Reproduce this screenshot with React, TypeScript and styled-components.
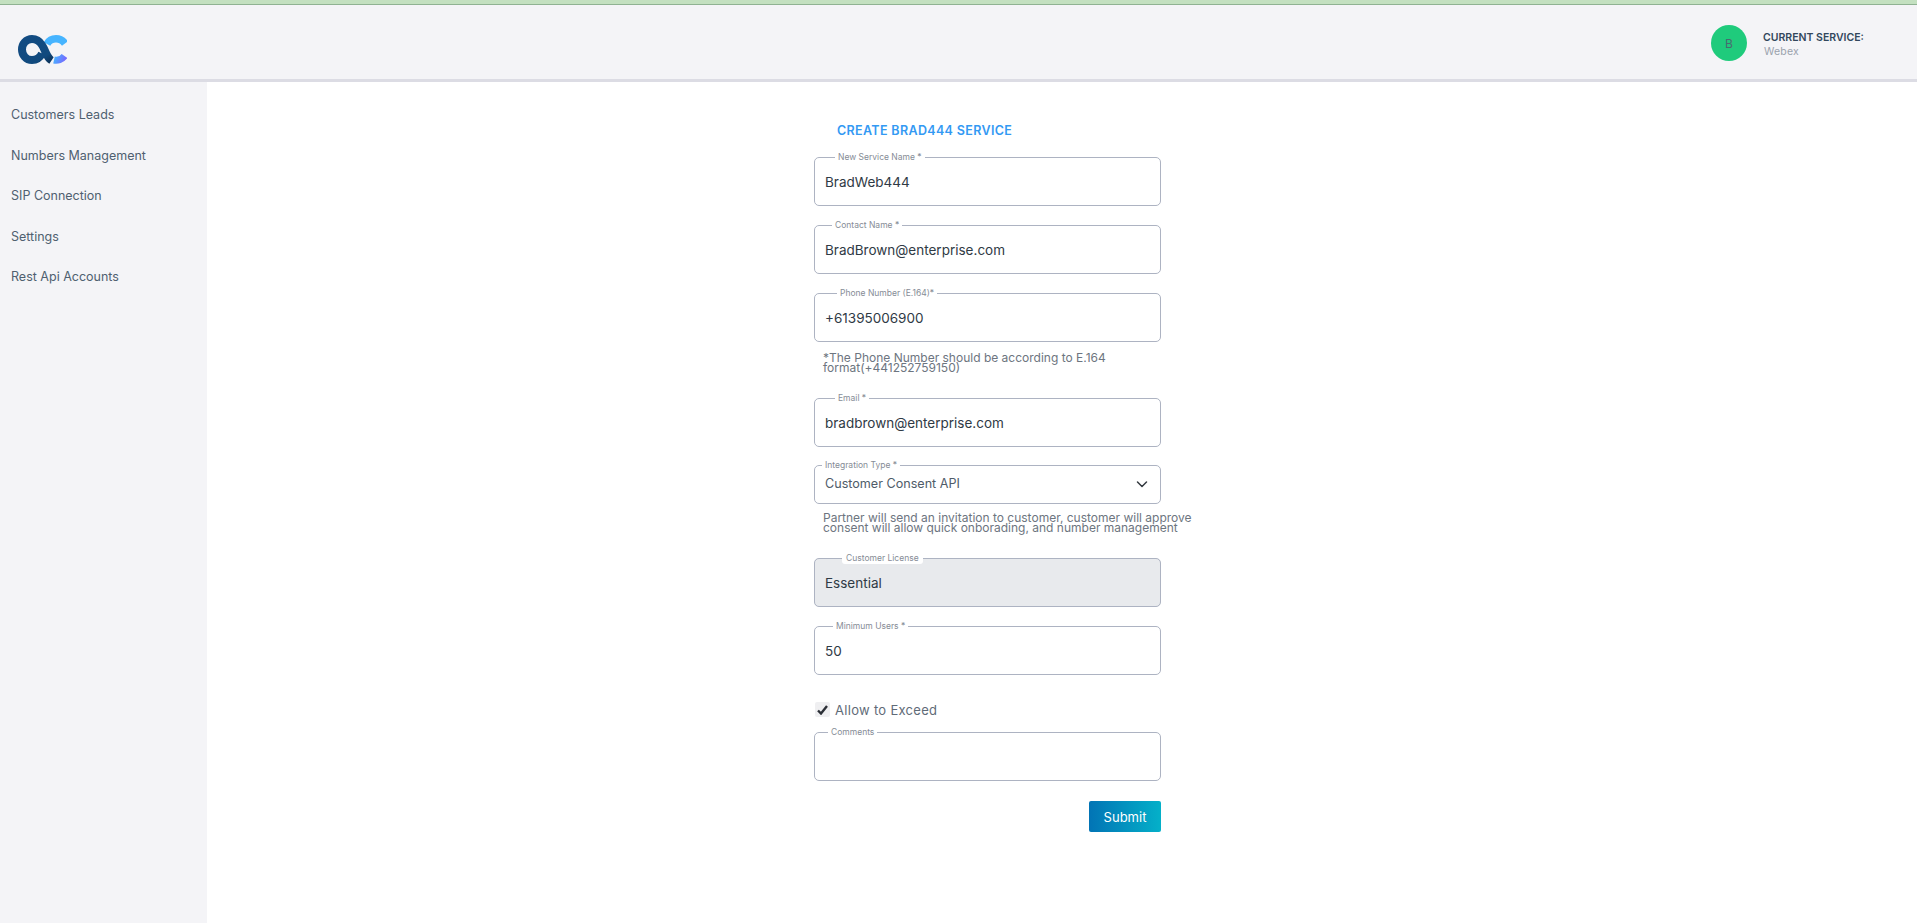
import styled, { createGlobalStyle } from 'styled-components'

const GlobalStyle = createGlobalStyle`
  html, body {
    margin: 0;
    padding: 0;
    background: #fff;
    font-family: Inter, "Liberation Sans", sans-serif;
  }
  * { box-sizing: border-box; }
`;

const Page = styled.div`
  display: flex;
  flex-direction: column;
  height: 923px;
  overflow: hidden;
`;

const TopStrip = styled.div`
  height: 5px;
  flex: none;
  background: #c3e0c0;
  border-bottom: 1px solid #8fb292;
`;

const Header = styled.header`
  display: flex;
  flex: none;
  align-items: center;
  justify-content: space-between;
  height: 77px;
  padding: 2px 0 0 18px;
  background: #f4f4f7;
  border-bottom: 3px solid #dcdce4;
`;

const LogoMark = styled.svg`
  margin-top: 13px;
`;

const ServiceInfo = styled.div`
  display: flex;
  align-items: center;
  width: 206px;
`;

const Avatar = styled.div`
  display: flex;
  align-items: center;
  justify-content: center;
  width: 36px;
  height: 36px;
  margin-right: 16px;
  border-radius: 50%;
  background: #1fcb7c;
  color: #4a6a70;
  font-size: 12px;
`;

const ServiceText = styled.div`
  margin-top: 4px;
`;

const ServiceLabel = styled.div`
  color: #32475c;
  font-size: 10.5px;
  font-weight: 600;
  line-height: 14px;
`;

const ServiceName = styled.div`
  margin-left: 1px;
  color: #9aa2ad;
  font-size: 10.5px;
  line-height: 14px;
  letter-spacing: 0.2px;
`;

const Body = styled.div`
  display: flex;
  flex: 1;
  min-height: 0;
`;

const Sidebar = styled.nav`
  display: flex;
  flex: none;
  flex-direction: column;
  gap: 23.5px;
  width: 207px;
  padding: 24px 0 0 11px;
  background: #f4f4f7;
`;

const NavItem = styled.a`
  color: #4f6070;
  font-size: 12.5px;
  line-height: 17px;
`;

const Main = styled.main`
  flex: 1;
  padding: 41px 0 0 607px;
`;

const Form = styled.form`
  display: flex;
  flex-direction: column;
  width: 347px;
`;

const Title = styled.h1`
  margin: 0 0 14px 23px;
  color: #3399f3;
  font-size: 12.5px;
  font-weight: 600;
  line-height: 16px;
  letter-spacing: 0.35px;
`;

const Field = styled.fieldset<{ $height?: number; $disabled?: boolean; $gap?: number }>`
  display: block;
  flex: none;
  height: ${p => p.$height ?? 53}px;
  min-width: 0;
  margin: 0 0 ${p => p.$gap ?? 15}px;
  padding: 0 10px;
  border: 1px solid #adb3c2;
  border-radius: 5px;
  background: ${p => (p.$disabled ? '#e8eaed' : '#fff')};
`;

const Legend = styled.legend<{ $offset: number; $filled?: boolean }>`
  margin-left: ${p => p.$offset}px;
  padding: 0 3px;
  color: #868c96;
  font-size: 8.5px;
  line-height: 8px;
  border-radius: 2px;
  background: ${p => (p.$filled ? '#fff' : 'transparent')};
  box-shadow: ${p => (p.$filled ? '0 1px 0 1px #fff' : 'none')};
`;

const Value = styled.div`
  margin-top: 10.5px;
  color: #2f3a45;
  font-size: 13.5px;
  line-height: 20px;
`;

const SelectRow = styled.div`
  display: flex;
  align-items: center;
  justify-content: space-between;
  margin-top: 4.5px;
  padding-right: 2px;
  color: #4f5c69;
  font-size: 12.6px;
  line-height: 20px;
`;

const Help = styled.p<{ $width: number; $top: number; $gap: number }>`
  width: ${p => p.$width}px;
  margin: ${p => p.$top}px 0 ${p => p.$gap}px 9px;
  color: #6d7580;
  font-size: 12px;
  line-height: 10px;
`;

const CheckRow = styled.label`
  display: flex;
  align-items: center;
  gap: 5px;
  height: 16px;
  margin: 11.6px 0 10.5px 1px;
  color: #5f6b78;
  font-size: 13px;
  letter-spacing: 0.3px;
`;

const CheckBox = styled.span`
  display: flex;
  align-items: center;
  justify-content: center;
  width: 15px;
  height: 15px;
  border-radius: 2px;
  background: #efeff1;
`;

const Actions = styled.div`
  display: flex;
  justify-content: flex-end;
`;

const SubmitButton = styled.button`
  width: 72px;
  height: 31px;
  border: 0;
  border-radius: 2px;
  background: linear-gradient(90deg, #0274b5, #04b0c9);
  color: #fff;
  font-family: inherit;
  font-size: 13px;
`;

function Logo() {
  return (
    <LogoMark width="49" height="29" viewBox="0 0 49 29" fill="none">
      <defs>
        <linearGradient id="ringFade" x1="14" y1="0" x2="34" y2="29" gradientUnits="userSpaceOnUse">
          <stop offset="0" stopColor="#124b82" />
          <stop offset="0.7" stopColor="#114a7e" />
          <stop offset="1" stopColor="#0a2c50" />
        </linearGradient>
        <linearGradient id="arcFade" x1="36" y1="22" x2="48" y2="27" gradientUnits="userSpaceOnUse">
          <stop offset="0" stopColor="#46b4ff" />
          <stop offset="1" stopColor="#7b62ff" />
        </linearGradient>
      </defs>
      <path d="M29 9C31 5.5 34.5 3.8 38 3.8C42 3.8 45 5.8 47 8.5" stroke="#46b4ff" strokeWidth="7.5" />
      <path d="M36 25C39.5 25.8 44 24.5 46.5 21" stroke="url(#arcFade)" strokeWidth="7" />
      <path
        d="M33.5 25.5C28 22 27.5 15 24 10C21.5 6 18 4 14 4C8 4 4 9 4 14.5C4 20 8 25 14 25C18.5 25 22 22.5 24 18.5"
        stroke="url(#ringFade)"
        strokeWidth="8"
      />
    </LogoMark>
  )
}

const navItems = ['Customers Leads', 'Numbers Management', 'SIP Connection', 'Settings', 'Rest Api Accounts']

function App() {
  return (
    <Page>
      <GlobalStyle />
      <TopStrip />
      <Header>
        <Logo />
        <ServiceInfo>
          <Avatar>B</Avatar>
          <ServiceText>
            <ServiceLabel>CURRENT SERVICE:</ServiceLabel>
            <ServiceName>Webex</ServiceName>
          </ServiceText>
        </ServiceInfo>
      </Header>
      <Body>
        <Sidebar>
          {navItems.map(item => (
            <NavItem key={item}>{item}</NavItem>
          ))}
        </Sidebar>
        <Main>
          <Form>
            <Title>CREATE BRAD444 SERVICE</Title>
            <Field>
              <Legend $offset={10}>New Service Name *</Legend>
              <Value>BradWeb444</Value>
            </Field>
            <Field>
              <Legend $offset={7}>Contact Name *</Legend>
              <Value>BradBrown@enterprise.com</Value>
            </Field>
            <Field>
              <Legend $offset={12}>Phone Number (E.164)*</Legend>
              <Value>+61395006900</Value>
            </Field>
            <Help $width={310} $top={-4} $gap={21}>*The Phone Number should be according to E.164 format(+441252759150)</Help>
            <Field $gap={14}>
              <Legend $offset={10}>Email *</Legend>
              <Value>bradbrown@enterprise.com</Value>
            </Field>
            <Field $height={43}>
              <Legend $offset={-3}>Integration Type *</Legend>
              <SelectRow>
                Customer Consent API
                <svg width="12" height="12" viewBox="0 0 12 12" fill="none" stroke="#343a40" strokeWidth="1.5" strokeLinecap="round" strokeLinejoin="round">
                  <path d="M1.5 4l4.5 4.5L10.5 4" />
                </svg>
              </SelectRow>
            </Field>
            <Help $width={375} $top={-6} $gap={21}>Partner will send an invitation to customer, customer will approve consent will allow quick onborading, and number management</Help>
            <Field $disabled>
              <Legend $offset={18} $filled>Customer License</Legend>
              <Value>Essential</Value>
            </Field>
            <Field>
              <Legend $offset={8}>Minimum Users *</Legend>
              <Value>50</Value>
            </Field>
            <CheckRow>
              <CheckBox>
                <svg width="11" height="10" viewBox="0 0 11 10" fill="none" stroke="#2b2f36" strokeWidth="2.4">
                  <path d="M1 5.5l3 3L10 1" />
                </svg>
              </CheckBox>
              Allow to Exceed
            </CheckRow>
            <Field $gap={20}>
              <Legend $offset={3}>Comments</Legend>
            </Field>
            <Actions>
              <SubmitButton type="button">Submit</SubmitButton>
            </Actions>
          </Form>
        </Main>
      </Body>
    </Page>
  )
}

export default App
